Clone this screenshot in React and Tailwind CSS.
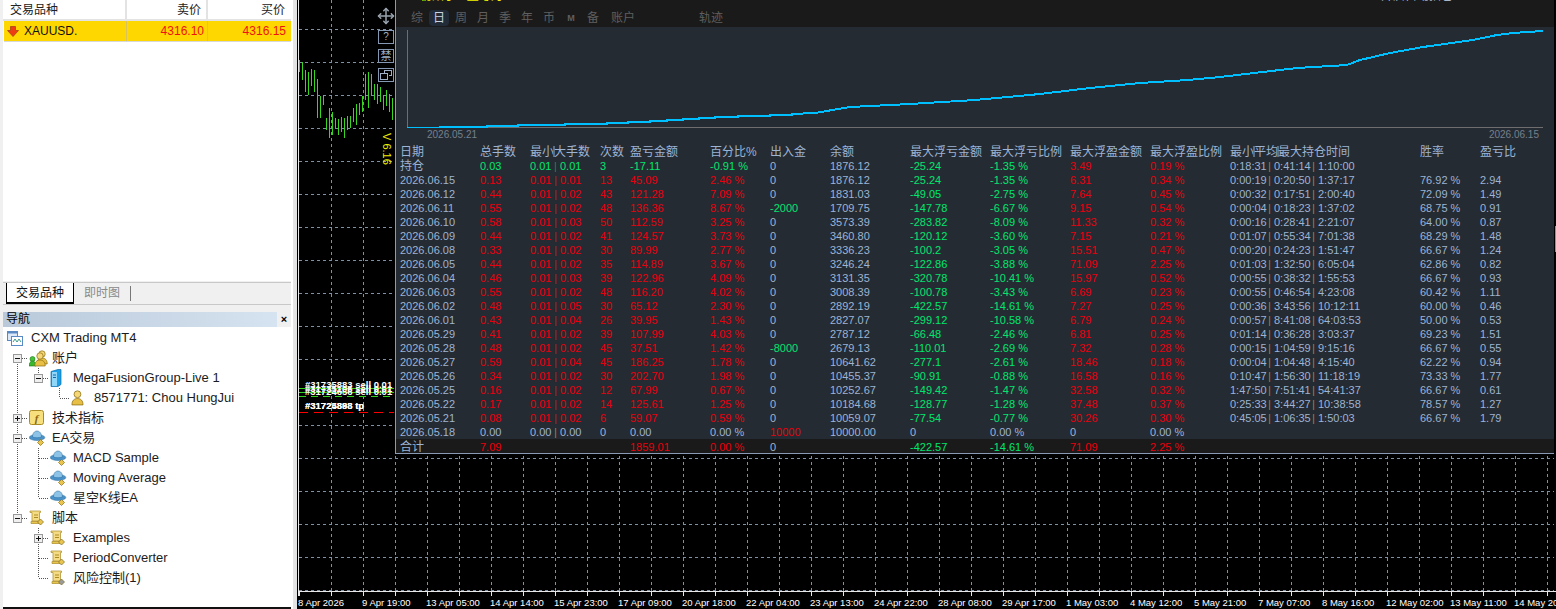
import { Move } from "lucide-react";

const cjk = '"Liberation Sans", "Noto Sans CJK SC", sans-serif';

const columns = "grid grid-cols-[80px_50px_70px_30px_80px_60px_60px_80px_80px_80px_80px_80px_190px_60px_60px]";

const rows = [
  ["2026.06.15", "0.13", "0.01", "0.01", "13", "45.09", "2.46 %", "0", "1876.12", "-25.24", "-1.35 %", "6.31", "0.34 %", "0:00:19", "0:20:50", "1:37:17", "76.92 %", "2.94"],
  ["2026.06.12", "0.44", "0.01", "0.02", "43", "121.28", "7.09 %", "0", "1831.03", "-49.05", "-2.75 %", "7.64", "0.45 %", "0:00:32", "0:17:51", "2:00:40", "72.09 %", "1.49"],
  ["2026.06.11", "0.55", "0.01", "0.02", "48", "136.36", "8.67 %", "-2000", "1709.75", "-147.78", "-6.67 %", "9.15", "0.54 %", "0:00:04", "0:18:23", "1:37:02", "68.75 %", "0.91"],
  ["2026.06.10", "0.58", "0.01", "0.03", "50", "112.59", "3.25 %", "0", "3573.39", "-283.82", "-8.09 %", "11.33", "0.32 %", "0:00:16", "0:28:41", "2:21:07", "64.00 %", "0.87"],
  ["2026.06.09", "0.44", "0.01", "0.02", "41", "124.57", "3.73 %", "0", "3460.80", "-120.12", "-3.60 %", "7.15", "0.21 %", "0:01:07", "0:55:34", "7:01:38", "68.29 %", "1.48"],
  ["2026.06.08", "0.33", "0.01", "0.02", "30", "89.99", "2.77 %", "0", "3336.23", "-100.2", "-3.05 %", "15.51", "0.47 %", "0:00:20", "0:24:23", "1:51:47", "66.67 %", "1.24"],
  ["2026.06.05", "0.44", "0.01", "0.02", "35", "114.89", "3.67 %", "0", "3246.24", "-122.86", "-3.88 %", "71.09", "2.25 %", "0:01:03", "1:32:50", "6:05:04", "62.86 %", "0.82"],
  ["2026.06.04", "0.46", "0.01", "0.03", "39", "122.96", "4.09 %", "0", "3131.35", "-320.78", "-10.41 %", "15.97", "0.52 %", "0:00:55", "0:38:32", "1:55:53", "66.67 %", "0.93"],
  ["2026.06.03", "0.55", "0.01", "0.02", "48", "116.20", "4.02 %", "0", "3008.39", "-100.78", "-3.43 %", "6.69", "0.23 %", "0:00:55", "0:46:54", "4:23:08", "60.42 %", "1.11"],
  ["2026.06.02", "0.48", "0.01", "0.05", "30", "65.12", "2.30 %", "0", "2892.19", "-422.57", "-14.61 %", "7.27", "0.25 %", "0:00:36", "3:43:56", "10:12:11", "60.00 %", "0.46"],
  ["2026.06.01", "0.43", "0.01", "0.04", "26", "39.95", "1.43 %", "0", "2827.07", "-299.12", "-10.58 %", "6.79", "0.24 %", "0:00:57", "8:41:08", "64:03:53", "50.00 %", "0.53"],
  ["2026.05.29", "0.41", "0.01", "0.02", "39", "107.99", "4.03 %", "0", "2787.12", "-66.48", "-2.46 %", "6.81", "0.25 %", "0:01:14", "0:36:28", "3:03:37", "69.23 %", "1.51"],
  ["2026.05.28", "0.48", "0.01", "0.02", "45", "37.51", "1.42 %", "-8000", "2679.13", "-110.01", "-2.69 %", "7.32", "0.28 %", "0:00:15", "1:04:59", "9:15:16", "66.67 %", "0.55"],
  ["2026.05.27", "0.59", "0.01", "0.04", "45", "186.25", "1.78 %", "0", "10641.62", "-277.1", "-2.61 %", "18.46", "0.18 %", "0:00:04", "1:04:48", "4:15:40", "62.22 %", "0.94"],
  ["2026.05.26", "0.34", "0.01", "0.02", "30", "202.70", "1.98 %", "0", "10455.37", "-90.91", "-0.88 %", "16.58", "0.16 %", "0:10:47", "1:56:30", "11:18:19", "73.33 %", "1.77"],
  ["2026.05.25", "0.16", "0.01", "0.02", "12", "67.99", "0.67 %", "0", "10252.67", "-149.42", "-1.47 %", "32.58", "0.32 %", "1:47:50", "7:51:41", "54:41:37", "66.67 %", "0.61"],
  ["2026.05.22", "0.17", "0.01", "0.02", "14", "125.61", "1.25 %", "0", "10184.68", "-128.77", "-1.28 %", "37.48", "0.37 %", "0:25:33", "3:44:27", "10:38:58", "78.57 %", "1.27"],
  ["2026.05.21", "0.08", "0.01", "0.02", "6", "59.07", "0.59 %", "0", "10059.07", "-77.54", "-0.77 %", "30.26", "0.30 %", "0:45:05", "1:06:35", "1:50:03", "66.67 %", "1.79"],
];

const timeLabels = [
  "8 Apr 2026", "9 Apr 19:00", "13 Apr 05:00", "14 Apr 14:00", "15 Apr 23:00", "17 Apr 09:00", "20 Apr 18:00",
  "22 Apr 04:00", "23 Apr 13:00", "24 Apr 22:00", "28 Apr 08:00", "29 Apr 17:00", "1 May 03:00", "4 May 12:00",
  "5 May 21:00", "7 May 07:00", "8 May 16:00", "12 May 02:00", "13 May 11:00", "14 May 20:00",
];

const bars = [
  [60, 72], [62, 80], [70, 92], [72, 95], [69, 86], [70, 92], [79, 118], [96, 118], [95, 105], [118, 130], [108, 138],
  [112, 135], [118, 128], [119, 135], [117, 132], [118, 138], [116, 130], [116, 128], [108, 122], [104, 125], [103, 115],
  [96, 112], [74, 100], [72, 108], [74, 96], [84, 100], [84, 104], [87, 102], [96, 110], [90, 106], [94, 112], [98, 120],
];

// curve points in page pixels, shifted into the panel when drawn
const curve = [
  [407, 128], [440, 128], [440, 127], [487, 127], [487, 126], [518, 126], [518, 125], [565, 125], [565, 124], [607, 124],
  [607, 123], [628, 123], [628, 122], [650, 122], [650, 121], [667, 121], [667, 120], [683, 120], [683, 119], [699, 119],
  [699, 118], [715, 118], [715, 117], [738, 117], [738, 116], [770, 116], [770, 115], [792, 115], [792, 114], [815, 113],
  [850, 107], [910, 104], [975, 100], [1040, 94], [1090, 88], [1140, 83], [1188, 80], [1220, 77], [1297, 68], [1347, 65],
  [1360, 60], [1390, 53], [1423, 47], [1473, 40], [1497, 35], [1513, 33], [1543, 31],
];

function Grid() {
  const xs = Array.from({ length: 39 }, (_, i) => 34 + i * 32);
  const ys = Array.from({ length: 18 }, (_, i) => 29 + i * 33);
  return (
    <svg className="absolute inset-0" width="1259" height="609" shapeRendering="crispEdges">
      {xs.map((x) => (
        <g key={x}>
          <line x1={x + 0.5} y1="0" x2={x + 0.5} y2="591" stroke="#8090a4" strokeDasharray="3 3" />
          <line x1={x + 0.5} y1="591" x2={x + 0.5} y2="596" stroke="#e8e8e8" />
        </g>
      ))}
      {ys.map((y) => (
        <line key={y} x1="2" y1={y + 0.5} x2="1257" y2={y + 0.5} stroke="#8090a4" strokeDasharray="3 3" />
      ))}
      <line x1="1.5" y1="0" x2="1.5" y2="596" stroke="#e8e8e8" />
      <line x1="1" y1="591.5" x2="1259" y2="591.5" stroke="#e8e8e8" />
      <line x1="2.5" y1="591" x2="2.5" y2="596" stroke="#e8e8e8" />
      {bars.map(([top, bottom], i) => (
        <line key={i} x1={2.5 + i * 3} y1={top} x2={2.5 + i * 3} y2={bottom} stroke="#35d81e" />
      ))}
      <line x1="2" y1="388.5" x2="97" y2="388.5" stroke="#2fd41a" />
      <line x1="2" y1="392.5" x2="97" y2="392.5" stroke="#2fd41a" />
      <line x1="2" y1="396.5" x2="97" y2="396.5" stroke="#2fd41a" strokeDasharray="7 5" />
      <line x1="2" y1="412.5" x2="97" y2="412.5" stroke="#f00" strokeDasharray="9 6" />
      <rect x="1258" y="226" width="1" height="26" fill="#35d81e" />
    </svg>
  );
}

function ChartTools() {
  return (
    <div className="absolute left-[80px] top-[7px] flex flex-col items-center gap-[5px]">
      <Move size={18} strokeWidth={2} className="text-[#98a2ae]" />
      <div className="flex h-[14px] w-[16px] items-center justify-center border border-[#8498b4] text-[10px] leading-none text-[#9fb0c6]">?</div>
      <div className="flex h-[14px] w-[16px] items-center justify-center border border-[#8498b4] text-[11px] leading-none text-[#9fb0c6]">禁</div>
      <div className="flex h-[14px] w-[16px] items-center justify-center border border-[#8498b4]">
        <svg width="12" height="10" fill="none" stroke="#9fb0c6" strokeWidth="1" shapeRendering="crispEdges">
          <path d="M4.5 3V.5h7v5H8.500" />
          <rect x=".5" y="3.500" width="7" height="5.500" />
        </svg>
      </div>
    </div>
  );
}

function TradeLabels() {
  const labels = [
    [8, 379, "#31735883 sell 0.01"],
    [8, 383, "#31735106 sell 0.01"],
    [8, 386, "#31724656 sell 0.01"],
    [8, 400, "#31725898 tp"],
    [8, 400, "#31724888 tp"],
  ];
  return labels.map(([left, top, text], i) => (
    <span
      key={i}
      style={{ left, top }}
      className="absolute whitespace-nowrap text-[9.500px] font-bold leading-[12px] text-white"
    >
      {text}
    </span>
  ));
}

function Parts({ items, width, tone }) {
  return (
    <span className="flex">
      {items.map((item, i) => (
        <span key={i} className="flex">
          <span className={width}>{item}</span>
          {i < items.length - 1 && <span className={`w-[6px] ${tone}`}>|</span>}
        </span>
      ))}
    </span>
  );
}

function HeadBar() {
  return <span className="mx-[-1px] inline-block h-[11px] w-[2px] bg-[#5a6f86] align-[-1px]" />;
}

function StatsPanel() {
  const head = ["日期", "总手数", null, "次数", "盈亏金额", "百分比%", "出入金", "余额", "最大浮亏金额", "最大浮亏比例", "最大浮盈金额", "最大浮盈比例", null, "胜率", "盈亏比"];
  const blue = "text-[#9db4d2]";
  const red = "text-[#e8000b]";
  const green = "text-[#00e66e]";
  const brown = "text-[#a97c3c]";
  return (
    <div className="absolute left-[98px] top-0 w-[1159px] overflow-hidden border-b border-l border-[#8a9ab5] bg-[#252b33] text-[11px] leading-[14px]">
      <div className="relative h-[27px] bg-[#1a1a1a] text-[12px] text-[#5f5f5f]">
        <span className="absolute left-[24px] top-[-11px] text-[#f0f000]">初始手 · 盈亏为</span>
        <span className="absolute left-[985px] top-[-11px] text-[#a8b6c8]">开启自动拍仓</span>
        <div className="flex pl-[10px] pt-[11px]">
          <span className="w-[22px] text-center">综</span>
          <span className="mt-[-1px] h-[16px] w-[20px] mx-[1px] rounded-sm bg-[#222b38] text-center leading-[16px] text-[#c8d4e4]">日</span>
          <span className="w-[22px] text-center">周</span>
          <span className="w-[22px] text-center">月</span>
          <span className="w-[22px] text-center">季</span>
          <span className="w-[22px] text-center">年</span>
          <span className="w-[22px] text-center">币</span>
          <span className="w-[22px] text-center text-[9px] font-bold">M</span>
          <span className="w-[22px] text-center">备</span>
          <span className="ml-[7px] w-[30px]">账户</span>
          <span className="ml-[58px] w-[30px]">轨迹</span>
        </div>
      </div>

      <svg width="1159" height="101" className="block" fill="none" shapeRendering="crispEdges">
        <path d="M11.500 3V100.500H1147" stroke="#6e6e6e" />
        <polyline points={curve.map(([x, y]) => `${x - 396},${y - 27}`).join(" ")} stroke="#00bfff" strokeWidth="2" />
      </svg>
      <div className="flex h-[17px] justify-between pl-[31px] pr-[15px] pt-px text-[10px] leading-[12px] text-[#76808c]">
        <span>2026.05.21</span>
        <span>2026.06.15</span>
      </div>

      <div className={`${columns} pl-[4px] text-[12px] ${blue}`}>
        {head.map((h, i) => (
          <span key={i} className="whitespace-nowrap">
            {i === 2 && <>最小<HeadBar />大手数</>}
            {i === 12 && <>最小<HeadBar />平均<HeadBar />最大持仓时间</>}
            {h}
          </span>
        ))}
      </div>

      <div className={`${columns} whitespace-nowrap pl-[4px] ${blue}`}>
        <span className="text-[12px]">持仓</span>
        <span className={green}>0.03</span>
        <span className={green}><Parts items={["0.01", "0.01"]} width="w-[24px]" tone="text-[#0f8f4c]" /></span>
        <span className={green}>3</span>
        <span className={green}>-17.11</span>
        <span className={green}>-0.91 %</span>
        <span>0</span>
        <span>1876.12</span>
        <span className={green}>-25.24</span>
        <span className={green}>-1.35 %</span>
        <span className={red}>3.49</span>
        <span className={red}>0.19 %</span>
        <Parts items={["0:18:31", "0:41:14", "1:10:00"]} width="w-[38px]" tone={brown} />
        <span />
        <span />
      </div>

      {rows.map((r) => (
        <div key={r[0]} className={`${columns} whitespace-nowrap pl-[4px] ${blue}`}>
          <span>{r[0]}</span>
          <span className={red}>{r[1]}</span>
          <span className={red}><Parts items={[r[2], r[3]]} width="w-[24px]" tone={red} /></span>
          <span className={red}>{r[4]}</span>
          <span className={red}>{r[5]}</span>
          <span className={red}>{r[6]}</span>
          <span className={r[7] === "0" ? "" : green}>{r[7]}</span>
          <span>{r[8]}</span>
          <span className={green}>{r[9]}</span>
          <span className={green}>{r[10]}</span>
          <span className={red}>{r[11]}</span>
          <span className={red}>{r[12]}</span>
          <Parts items={[r[13], r[14], r[15]]} width="w-[38px]" tone={brown} />
          <span>{r[16]}</span>
          <span>{r[17]}</span>
        </div>
      ))}

      <div className={`${columns} whitespace-nowrap pl-[4px] ${blue}`}>
        <span>2026.05.18</span>
        <span>0.00</span>
        <Parts items={["0.00", "0.00"]} width="w-[24px]" tone={brown} />
        <span>0</span>
        <span>0.00</span>
        <span>0.00 %</span>
        <span className={red}>10000</span>
        <span>10000.00</span>
        <span>0</span>
        <span>0.00 %</span>
        <span>0</span>
        <span>0.00 %</span>
      </div>

      <div className={`${columns} h-[14px] whitespace-nowrap bg-[#1a1a1a] pl-[4px] pt-px ${blue}`}>
        <span className="text-[12px]">合计</span>
        <span className={red}>7.09</span>
        <span />
        <span />
        <span className={red}>1859.01</span>
        <span className={red}>0.00 %</span>
        <span>0</span>
        <span />
        <span className={green}>-422.57</span>
        <span className={green}>-14.61 %</span>
        <span className={red}>71.09</span>
        <span className={red}>2.25 %</span>
      </div>
    </div>
  );
}

function Guide({ up, down, right, box }) {
  return (
    <svg width="21" height="20" className="shrink-0" shapeRendering="crispEdges">
      {up && <line x1="10.500" y1="0" x2="10.500" y2="10" stroke="#555" strokeDasharray="1 1" />}
      {down && <line x1="10.500" y1="10" x2="10.500" y2="20" stroke="#555" strokeDasharray="1 1" />}
      {right && <line x1="10.500" y1="10.500" x2="21" y2="10.500" stroke="#555" strokeDasharray="1 1" />}
      {box && (
        <>
          <rect x="6.500" y="6.500" width="8" height="8" fill="#efefef" stroke="#999" />
          <line x1="8" y1="10.500" x2="13" y2="10.500" stroke="#111" />
          {box === "plus" && <line x1="10.500" y1="8" x2="10.500" y2="13" stroke="#111" />}
        </>
      )}
    </svg>
  );
}

const LINE = { up: true, down: true };
const BLANK = {};
const TEE = { up: true, down: true, right: true };
const ELBOW = { up: true, right: true };

function Person({ x = 0, y = 0 }) {
  return (
    <g transform={`translate(${x} ${y})`}>
      <circle cx="6" cy="4" r="3.200" fill="#f5d778" stroke="#8a6d10" strokeWidth=".7" />
      <path d="M.8 14c0-4 2-6 5.200-6s5.200 2 5.200 6z" fill="#e8bf45" stroke="#8a6d10" strokeWidth=".7" />
    </g>
  );
}

function AccountsIcon() {
  return (
    <svg width="19" height="17" viewBox="0 0 19 17">
      <Person x="7" y="0" />
      <circle cx="3.500" cy="9" r="2.500" fill="#46c13a" stroke="#1d7a16" strokeWidth=".6" />
      <path d="M0 16c0-3 1.500-5 3.500-5s3.500 2 3.500 5z" fill="#39b82d" stroke="#1d7a16" strokeWidth=".6" />
      <Person x="5" y="2" />
    </svg>
  );
}

function TerminalIcon() {
  return (
    <svg width="16" height="15" viewBox="0 0 16 15">
      <rect x=".5" y=".5" width="10" height="9" fill="#dbe8f7" stroke="#5a8ac6" />
      <rect x=".5" y=".5" width="10" height="2" fill="#5a8ac6" />
      <rect x="4.500" y="5.500" width="11" height="9" fill="#fff" stroke="#5a8ac6" />
      <path d="M6 11l2-3 2 3 2-3 2 3" fill="none" stroke="#3d9a8c" />
    </svg>
  );
}

function ServerIcon() {
  return (
    <svg width="12" height="18" viewBox="0 0 12 18">
      <path d="M1 2.500 8 .5h3v15l-3 2H1z" fill="#1aa0e8" stroke="#0d6aa8" strokeWidth=".7" />
      <rect x="2" y="3" width="5" height="14" fill="#8fd6f8" />
      <path d="M3 6h3M3 8.500h3" stroke="#0d6aa8" />
    </svg>
  );
}

function FunctionIcon() {
  return (
    <svg width="16" height="16" viewBox="0 0 16 16">
      <rect x=".5" y=".5" width="14" height="14" rx="2" fill="#f7df7e" stroke="#a98a25" />
      <text x="7.500" y="12" textAnchor="middle" fontSize="11" fontStyle="italic" fontWeight="bold" fontFamily="Liberation Serif" fill="#8a6510">f</text>
    </svg>
  );
}

function HatIcon() {
  return (
    <svg width="17" height="16" viewBox="0 0 17 16">
      <ellipse cx="8" cy="7.500" rx="7.800" ry="3" fill="#4b92c9" stroke="#27689a" strokeWidth=".5" />
      <path d="M3.500 7c0-3.800 2-6 4.500-6s4.500 2.200 4.500 6c-2.500 1-6.500 1-9 0z" fill="#8cc3e6" stroke="#27689a" strokeWidth=".5" />
      <path d="M11.500 9.500l3 3-3 3-3-3z" fill="#e9c54f" stroke="#8a6d10" strokeWidth=".7" />
    </svg>
  );
}

function ScriptIcon({ gem = "#e9c54f" }) {
  return (
    <svg width="16" height="16" viewBox="0 0 16 16">
      <path d="M1 1h10.500v1.500H10.500V11H3V2.500H1z" fill="#f5dc84" stroke="#a98a25" strokeWidth=".7" />
      <path d="M5 5h4M5 7.500h4" stroke="#a98a25" />
      <path d="M2 11.500h8v2H2z" fill="#e8c650" stroke="#a98a25" strokeWidth=".7" />
      <path d="M11.500 9l3 3-3 3-3-3z" fill={gem} stroke="#806a20" strokeWidth=".7" />
    </svg>
  );
}

function TreeRow({ guides, icon, wide, children }) {
  return (
    <div className="flex h-5 items-center whitespace-nowrap">
      {guides.map((g, i) => (
        <Guide key={i} {...g} />
      ))}
      <span className={`flex items-center ${wide ? "w-[24px]" : "w-[24px] pl-[1px]"}`}>{icon}</span>
      <span className="text-[13px] leading-5 text-[#1c1c1c]">{children}</span>
    </div>
  );
}

function Navigator() {
  return (
    <div className="flex min-h-0 flex-1 flex-col bg-white">
      <div className="flex h-[15px] shrink-0 items-center bg-[#f0f0f0]">
        <div className="h-full w-[274px] bg-gradient-to-r from-[#b9c9da] to-[#d6e3f0] pl-[3px] text-[12px] leading-[14px] text-black">导航</div>
        <span className="flex-1 text-center text-[11px] font-bold leading-none text-black">×</span>
      </div>
      <div className="flex-1 pl-[4px] pt-[1px]">
        <TreeRow guides={[]} icon={<TerminalIcon />} wide>CXM Trading MT4</TreeRow>
        <TreeRow guides={[{ down: true, right: true, box: "minus" }]} icon={<AccountsIcon />}>账户</TreeRow>
        <TreeRow guides={[LINE, { up: true, right: true, box: "minus" }]} icon={<ServerIcon />}>MegaFusionGroup-Live 1</TreeRow>
        <TreeRow guides={[LINE, BLANK, ELBOW]} icon={<svg width="14" height="16" viewBox="0 0 13 15"><Person x="0" y="0" /></svg>}>8571771: Chou HungJui</TreeRow>
        <TreeRow guides={[{ up: true, down: true, right: true, box: "plus" }]} icon={<FunctionIcon />}>技术指标</TreeRow>
        <TreeRow guides={[{ up: true, down: true, right: true, box: "minus" }]} icon={<HatIcon />}>EA交易</TreeRow>
        <TreeRow guides={[LINE, TEE]} icon={<HatIcon />}>MACD Sample</TreeRow>
        <TreeRow guides={[LINE, TEE]} icon={<HatIcon />}>Moving Average</TreeRow>
        <TreeRow guides={[LINE, ELBOW]} icon={<HatIcon />}>星空K线EA</TreeRow>
        <TreeRow guides={[{ up: true, right: true, box: "minus" }]} icon={<ScriptIcon />}>脚本</TreeRow>
        <TreeRow guides={[BLANK, { up: true, down: true, right: true, box: "plus" }]} icon={<ScriptIcon />}>Examples</TreeRow>
        <TreeRow guides={[BLANK, TEE]} icon={<ScriptIcon />}>PeriodConverter</TreeRow>
        <TreeRow guides={[BLANK, ELBOW]} icon={<ScriptIcon gem="#9a9a9a" />}>风险控制(1)</TreeRow>
      </div>
    </div>
  );
}

function MarketWatch() {
  return (
    <div className="h-[281px] bg-white text-[12px]">
      <div className="grid h-[21px] grid-cols-[124px_81px_1fr] border-b-2 border-[#e3e3e3] leading-[20px] text-[#222]">
        <span className="border-r-2 border-[#e3e3e3] pl-[7px]">交易品种</span>
        <span className="border-r-2 border-[#e3e3e3] pr-[5px] text-right">卖价</span>
        <span className="pr-[6px] text-right">买价</span>
      </div>
      <div className="ml-px grid h-[21px] grid-cols-[123px_81px_1fr] border-b border-[#d8d8d8] bg-[#ffd700] leading-[20px] text-[#f01010]">
        <span className="flex items-center gap-[5px] border-r border-[#d9c25e] pl-[3px] text-[#111]">
          <svg width="12" height="11" viewBox="0 0 12 11">
            <path d="M3.500.5h5v4h3L6 10.500.5 4.500h3z" fill="#ee3d12" stroke="#a8431c" strokeWidth=".8" />
          </svg>
          XAUUSD.
        </span>
        <span className="border-r border-[#d9c25e] pr-[3px] text-right">4316.10</span>
        <span className="pr-[5px] text-right">4316.15</span>
      </div>
    </div>
  );
}

function Tabs() {
  return (
    <div className="flex h-[22px] border-b border-[#c8c8c8] bg-[#f0f0f0] pl-[3px] text-[12px] leading-[20px]">
      <span className="h-[21px] w-[68px] border-b-2 border-l border-r border-black bg-white text-center text-[#111]">交易品种</span>
      <span className="ml-[10px] text-[#8a8a8a]">即时图</span>
      <span className="ml-[10px] mt-[3px] h-[15px] w-px bg-[#777]" />
    </div>
  );
}

export default function App() {
  return (
    <div className="flex h-[609px] w-[1556px] overflow-hidden bg-[#f0f0f0]" style={{ fontFamily: cjk }}>
      <div className="flex w-[291px] shrink-0 flex-col pl-[3px]">
        <MarketWatch />
        <div className="mt-[1px] border-t border-[#c8c8c8]" />
        <Tabs />
        <div className="h-[7px]" />
        <Navigator />
        <div className="h-[2px] bg-[#111]" />
      </div>
      <div className="w-[6px] shrink-0 border-l-2 border-white bg-[#e4e4e4]" />
      <div className="relative h-full flex-1 bg-black">
        <Grid />
        <ChartTools />
        <span className="absolute left-[84px] top-[133px] text-[11px] leading-none text-[#f0f000] [writing-mode:vertical-rl]">V 6.16</span>
        <TradeLabels />
        <StatsPanel />
        <div className="absolute bottom-0 left-[1px] flex whitespace-nowrap text-[9.500px] leading-[12px] text-white">
          {timeLabels.map((t) => (
            <span key={t} className="w-[64px]">{t}</span>
          ))}
        </div>
      </div>
    </div>
  );
}
